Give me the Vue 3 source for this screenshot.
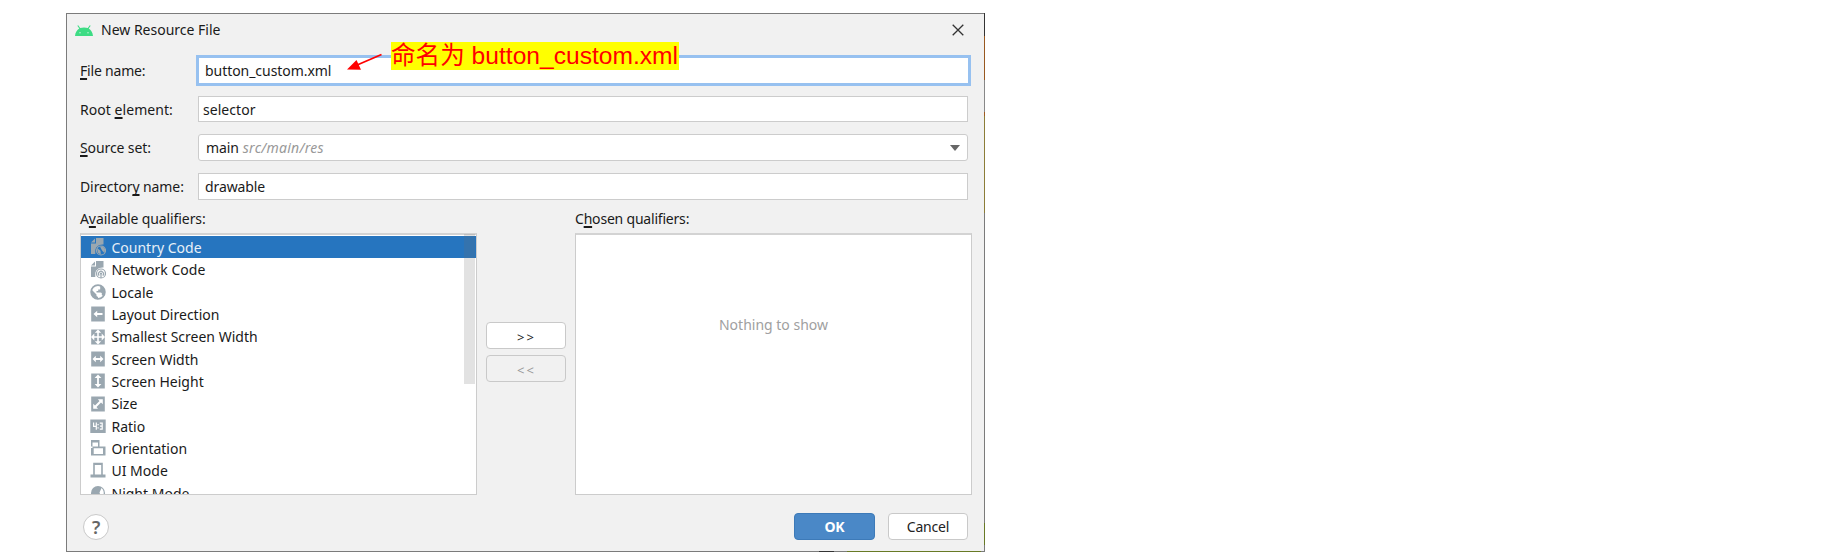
<script setup>
const fields = [
  { id: 'file', pre: '', key: 'F', post: 'ile name:', value: 'button_custom.xml' },
  { id: 'root', pre: 'Root ', key: 'e', post: 'lement:', value: 'selector' },
  { id: 'source', pre: '', key: 'S', post: 'ource set:', value: 'main', hint: 'src/main/res' },
  { id: 'dir', pre: 'Director', key: 'y', post: ' name:', value: 'drawable' },
]
const qualifiers = [
  { name: 'Country Code', icon: 'country' },
  { name: 'Network Code', icon: 'network' },
  { name: 'Locale', icon: 'locale' },
  { name: 'Layout Direction', icon: 'left' },
  { name: 'Smallest Screen Width', icon: 'four' },
  { name: 'Screen Width', icon: 'horizontal' },
  { name: 'Screen Height', icon: 'vertical' },
  { name: 'Size', icon: 'diagonal' },
  { name: 'Ratio', icon: 'ratio' },
  { name: 'Orientation', icon: 'orientation' },
  { name: 'UI Mode', icon: 'ui' },
  { name: 'Night Mode', icon: 'night' },
]
</script>

<template>
  <main class="dialog">
    <header class="titlebar">
      <svg class="android" width="18" height="11" viewBox="0 0 18 11">
        <path d="M0 11C.3 7.500 2 5 4.300 3.600L2.300.8 3.200.2 5.200 3.100C7.500 2.200 10.500 2.200 12.800 3.100L14.800.2 15.700.8 13.700 3.600C16 5 17.700 7.500 18 11z" fill="#3ddc84" />
        <circle cx="5" cy="7.700" r=".8" fill="#b5f0cf" /><circle cx="13" cy="7.700" r=".8" fill="#b5f0cf" />
      </svg>
      <h1>New Resource File</h1>
      <svg class="close" width="12" height="12" viewBox="0 0 12 12"><path d="M.7.7 11.300 11.300M11.300.7.7 11.300" stroke="#333" stroke-width="1.300" /></svg>
    </header>

    <section class="form">
      <div v-for="f in fields" :key="f.id" class="row" :class="f.id">
        <label><span>{{ f.pre }}<u>{{ f.key }}</u>{{ f.post }}</span></label>
        <div class="field">
          <span class="value">{{ f.value }}</span><i v-if="f.hint">{{ f.hint }}</i>
          <svg v-if="f.hint" class="caret" width="10" height="6" viewBox="0 0 10 6"><path d="M0 0H10L5 6z" fill="#666" /></svg>
        </div>
      </div>
    </section>

    <section class="pickers">
      <div class="column">
        <h2 class="available">A<u>v</u>ailable qualifiers:</h2>
        <ul class="list">
          <li v-for="(q, i) in qualifiers" :key="q.name" :class="{ selected: i === 0 }">
            <svg width="16" height="18" viewBox="0 0 16 18" fill="#9aa7b0">
              <template v-if="q.icon === 'country' || q.icon === 'network'">
                <path d="M6 0H13.500V6.500C9 6 5.300 9 5.300 13V16H1V5.500H6zM5 .5V4.500H1z" />
                <circle cx="11" cy="12.500" r="4.500" fill="none" stroke="#9aa7b0" stroke-width="1.200" />
                <path v-if="q.icon === 'country'" d="M7 10L10.500 12.800 10.800 16.500 8 15zM10 8.500L13 8.500 15 11 14.500 15 12.500 13 11.500 11.500z" />
                <template v-else>
                  <path d="M9.200 14.600A2.500 2.500 0 1 1 12.800 14.600M11 12.500V17" fill="none" stroke="#9aa7b0" stroke-width="1.200" />
                  <circle cx="11" cy="12.500" r="1.100" />
                </template>
              </template>
              <template v-else-if="q.icon === 'locale'">
                <circle cx="8" cy="9" r="6.900" fill="none" stroke="#9aa7b0" stroke-width="1.700" />
                <path d="M1.500 6.500L6.500 11.500V13L8 14V16.200C3.500 16.200 1 12 1.500 6.500zM10.200 2.500C13 3 15.800 7 14.500 12.500L12.800 12.700 11.800 12V10L10.500 9.500H6.500V8H8.200V6.500H10.200z" />
              </template>
              <path v-else-if="q.icon === 'orientation'" fill-rule="evenodd" d="M1 1H9.500V7.500H15.500V16.500H1zM2.500 3.500V7.500H8V3.500zM3.700 9.200V15H13V9.200zM1 7.500V9H2.500V7.500z" />
              <path v-else-if="q.icon === 'ui'" fill-rule="evenodd" d="M3.200 .8H12.800V12.500H15.500V15.500H.5V12.500H3.200zM4.800 3V12.500H11.200V3z" />
              <template v-else-if="q.icon === 'night'">
                <circle cx="8" cy="9" r="7" /><path d="M11.500 4C14 6 14.500 10 12.500 12.500 11.500 11 9.500 10 9.500 8.500z" fill="#fff" />
              </template>
              <template v-else>
                <path v-if="q.icon === 'ratio'" d="M.3 2.500H15.700V16H.3z" />
                <path v-else d="M1.200 1.500H14.800V16.500H1.200z" />
                <g fill="#fff">
                  <path v-if="q.icon === 'left'" d="M3.500 9L7.200 5.800V8.100H12.500V9.900H7.200V12.200z" />
                  <path v-if="q.icon === 'four'" d="M7.200 7.500V4.800H4.800L8 1.500 11.200 4.800H8.800V8.200H11.700V5.600L15 9 11.700 12.400V9.800H8.800V13.200H11.200L8 16.500 4.800 13.200H7.200V9.800H4.300V12.400L1 9 4.300 5.600V8.200H7.200z" />
                  <path v-if="q.icon === 'horizontal'" d="M2.500 9L5.800 5.800V8.100H10.200V5.800L13.500 9 10.200 12.200V9.900H5.800V12.200z" />
                  <path v-if="q.icon === 'vertical'" d="M8 2.500L11.400 6H8.900V12H11.400L8 15.500 4.600 12H7.100V6H4.600z" />
                  <path v-if="q.icon === 'diagonal'" d="M12.800 4.200V9.200L11 7.500 6.500 12 8 13.800H3.200V8.800L5 10.500 9.500 6 7.800 4.200z" />
                  <path v-if="q.icon === 'ratio'" d="M3.600 5.500V9.300H6.300M6.300 5.500V12.700M9.800 6.100H12.200V12.100H9.800M10 9.100H12.200M8.100 7V8.300M8.100 10.200V11.500" fill="none" stroke="#fff" stroke-width="1.200" />
                </g>
              </template>
            </svg>
            <span>{{ q.name }}</span>
          </li>
        </ul>
        <div class="scrollbar"></div>
      </div>
      <div class="transfer">
        <button>&gt;&gt;</button>
        <button disabled>&lt;&lt;</button>
      </div>
      <div class="column">
        <h2 class="chosen">C<u>h</u>osen qualifiers:</h2>
        <div class="list empty"><span>Nothing to show</span></div>
      </div>
    </section>

    <footer>
      <button class="help">?</button>
      <button class="ok">OK</button>
      <button>Cancel</button>
    </footer>

    <svg class="arrow" width="36" height="18" viewBox="0 0 36 18"><path d="M34.500 1.500L9 12.500" stroke="#f00" stroke-width="1.800" /><path d="M0 16.500L9.500 7 14 16.800z" fill="#f00" /></svg>
    <div class="note"><span>命名为 button_custom.xml</span></div>
    <div class="edge right"></div>
    <div class="edge bottom"></div>
  </main>
</template>

<style>
body { background: #fff; }
</style>

<style scoped>
* { box-sizing: border-box; margin: 0; padding: 0; }
.dialog { position: relative; display: flex; flex-direction: column; width: 919px; height: 539px; margin: 13px 0 0 66px; background: #f1f1f1; border: 1px solid #7b7b7b; font: 14px/20px "Noto Sans", "Open Sans", sans-serif; color: #1a1a1a; letter-spacing: -0.1px; }
u { text-decoration-thickness: 1.500px; text-underline-offset: 2px; text-decoration-skip-ink: none; }
.titlebar { display: flex; align-items: center; height: 32px; padding: 0 20px 0 8px; }
h1, h2 { font: inherit; }
h1 { flex: 1; margin-left: 8px; letter-spacing: 0; }
.row { display: flex; align-items: center; height: 27px; margin: 0 16px 12px 13px; }
.row label { width: 118px; white-space: nowrap; }
.field { flex: 1; display: flex; align-items: center; height: 100%; padding: 0 7px 0 6px; background: #fff; border: 1px solid #ccc; }
.file { height: 31px; margin: 9px 13px 10px 13px; }
.file label { width: 116px; letter-spacing: -0.2px; }
.file .field { border: 3px solid #97c1f0; }
.file .value { letter-spacing: -0.05px; }
.root { height: 26px; letter-spacing: 0.05px; }
.root label, .root .value { padding-top: 2px; }
.root .field { padding-left: 4px; }
.source .field { border-radius: 3px; padding-left: 7px; }
.field i { margin-left: 4px; color: #999; flex: 1; letter-spacing: 0.25px; }
.pickers { display: flex; margin-left: 13px; }
.column { position: relative; width: 397px; }
.column h2 { height: 21px; line-height: 14px; }
.chosen { letter-spacing: -0.2px; }
.list { height: 262px; overflow: hidden; list-style: none; background: #fff; border: 1px solid #ccc; border-top: 2px solid #d3d3d3; padding-top: 1px; }
.list li { display: flex; align-items: center; height: 22.350px; padding-left: 9px; gap: 5px; letter-spacing: 0; }
.list li svg { flex: none; }
.list li span { padding: 1.500px 0 0 0.500px; }
.list .selected { background: #2675bf; color: #e8f0f8; }
.scrollbar { position: absolute; left: 384px; top: 22px; width: 11px; height: 150px; background: rgba(110,110,110,.2); }
.transfer { width: 98px; padding: 110px 9px 0; display: flex; flex-direction: column; gap: 6px; }
button { width: 80px; height: 27px; font: inherit; letter-spacing: -0.2px; color: #222; background: #fff; border: 1px solid #c9c9c9; border-radius: 4px; }
.transfer button { font-size: 13px; letter-spacing: 2px; padding: 2px 0 0 1px; }
button:disabled { background: #f1f1f1; color: #999; }
.empty { display: flex; justify-content: center; padding-top: 80px; color: #a0a0a0; }
.empty span { letter-spacing: 0; }
footer { display: flex; align-items: center; margin: 18px 16px 0 16px; height: 27px; gap: 13px; }
footer .help { width: 26px; height: 26px; border-radius: 50%; font-size: 18px; font-weight: 600; line-height: 22px; color: #666; margin-right: auto; }
.ok { width: 81px; color: #fff; background: #4a88c7; border-color: #3d7ab8; font-weight: 700; }
.arrow { position: absolute; left: 280px; top: 39px; }
.note { position: absolute; left: 324px; top: 28px; width: 288px; height: 28px; background: #ff0; color: #f00; font: 24.600px/27px "Liberation Sans", "Noto Sans CJK SC", sans-serif; white-space: nowrap; letter-spacing: 0; }
.edge { position: absolute; }
.right { top: -1px; right: -1px; width: 1px; height: 539px; background: linear-gradient(#333 0 23px, #985820 23px 67px, #888 67px 99px, #a05a20 99px 103px, #8c7d38 103px 200px, #7b7b7b 200px 510px, #687a25 510px 532px, #7b7b7b 532px); }
.bottom { bottom: -1px; left: 752px; width: 162px; height: 1px; background: linear-gradient(90deg, #333 0 15px, #7b7b7b 15px 28px, #687a25 28px); }
</style>
